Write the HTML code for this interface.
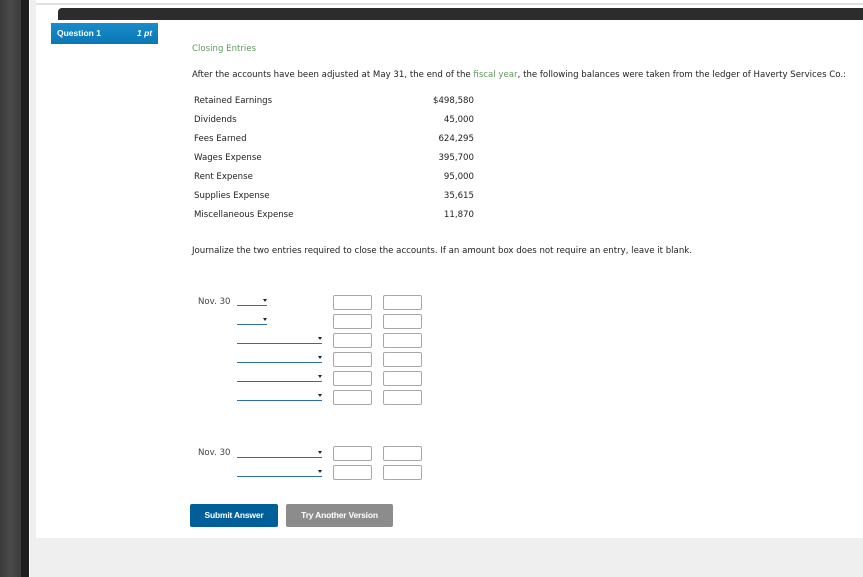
<!DOCTYPE html>
<html><head><style>
*{margin:0;padding:0;box-sizing:border-box}
body{width:863px;height:577px;overflow:hidden;background:#fff;position:relative;font-family:"DejaVu Sans","Liberation Sans",sans-serif;font-size:8.6px;color:#222}
.a{position:absolute;white-space:nowrap}
.box{position:absolute;width:39px;height:15px;border:1px solid #a8a8a8;border-radius:2px;background:#fff}
.sel{position:absolute;height:9px;border-bottom:1.5px solid #2f6ea0}
.sel:after{content:"";position:absolute;right:0;top:2px;border-left:2.5px solid transparent;border-right:2.5px solid transparent;border-top:3px solid #222}
.btn{position:absolute;height:23px;border-radius:2px;color:#fff;font-family:"Liberation Sans",sans-serif;font-weight:bold;font-size:8.5px;text-align:center;line-height:23px;letter-spacing:-0.2px}
.t{top:1px}
</style></head><body>
<div class="a" style="left:0;top:0;width:21px;height:577px;background:linear-gradient(90deg,#3a3a3a,#4a4a4a,#3c3c3c)"></div>
<div class="a" style="left:21px;top:0;width:8px;height:577px;background:#1e1e1e"></div>
<div class="a" style="left:30px;top:0;width:833px;height:577px;background:#efefef"></div>
<div class="a" style="left:36px;top:0;width:827px;height:538px;background:#fff"></div>
<div class="a" style="left:36px;top:3px;width:827px;height:2px;background:#e0e0e0"></div>
<div class="a" style="left:58px;top:8px;width:805px;height:12px;background:#2c2c2c;border-radius:4px 0 0 0"></div>
<div class="a" style="left:51px;top:23px;width:107px;height:21px;background:linear-gradient(#1a8ccb,#0a77b5);color:#fff;font-family:'Liberation Sans',sans-serif;font-weight:bold;font-size:8.5px;line-height:21px;padding-left:6px">Question 1<span style="position:absolute;left:86px;font-style:italic">1 pt</span></div>
<div class="a" style="left:192px;top:44px;color:#5f9a5a">Closing Entries</div>
<div class="a" style="left:192px;top:70px">After the accounts have been adjusted at May 31, the end of the <span style="color:#5f9a5a">fiscal year</span>, the following balances were taken from the ledger of Haverty Services Co.:</div>
<div class="a" style="left:194px;top:96px">Retained Earnings</div><div class="a" style="left:380px;width:94px;text-align:right;top:96px">$498,580</div>
<div class="a" style="left:194px;top:115px">Dividends</div><div class="a" style="left:380px;width:94px;text-align:right;top:115px">45,000</div>
<div class="a" style="left:194px;top:134px">Fees Earned</div><div class="a" style="left:380px;width:94px;text-align:right;top:134px">624,295</div>
<div class="a" style="left:194px;top:153px">Wages Expense</div><div class="a" style="left:380px;width:94px;text-align:right;top:153px">395,700</div>
<div class="a" style="left:194px;top:172px">Rent Expense</div><div class="a" style="left:380px;width:94px;text-align:right;top:172px">95,000</div>
<div class="a" style="left:194px;top:191px">Supplies Expense</div><div class="a" style="left:380px;width:94px;text-align:right;top:191px">35,615</div>
<div class="a" style="left:194px;top:210px">Miscellaneous Expense</div><div class="a" style="left:380px;width:94px;text-align:right;top:210px">11,870</div>
<div class="a" style="left:192px;top:246px">Journalize the two entries required to close the accounts. If an amount box does not require an entry, leave it blank.</div>
<div class="a" style="left:198px;top:297px;color:#444">Nov. 30</div>
<div class="sel" style="left:237px;top:297px;width:30px"></div>
<div class="sel" style="left:237px;top:316px;width:30px"></div>
<div class="sel" style="left:237px;top:335px;width:85px"></div>
<div class="sel" style="left:237px;top:354px;width:85px"></div>
<div class="sel" style="left:237px;top:373px;width:85px"></div>
<div class="sel" style="left:237px;top:392px;width:85px"></div>
<div class="box" style="left:333px;top:295px"></div><div class="box" style="left:383px;top:295px"></div>
<div class="box" style="left:333px;top:314px"></div><div class="box" style="left:383px;top:314px"></div>
<div class="box" style="left:333px;top:333px"></div><div class="box" style="left:383px;top:333px"></div>
<div class="box" style="left:333px;top:352px"></div><div class="box" style="left:383px;top:352px"></div>
<div class="box" style="left:333px;top:371px"></div><div class="box" style="left:383px;top:371px"></div>
<div class="box" style="left:333px;top:390px"></div><div class="box" style="left:383px;top:390px"></div>
<div class="a" style="left:198px;top:448px;color:#444">Nov. 30</div>
<div class="sel" style="left:237px;top:449px;width:85px"></div>
<div class="sel" style="left:237px;top:468px;width:85px"></div>
<div class="box" style="left:333px;top:446px"></div><div class="box" style="left:383px;top:446px"></div>
<div class="box" style="left:333px;top:465px"></div><div class="box" style="left:383px;top:465px"></div>
<div class="btn" style="left:190px;top:504px;width:88px;background:#005f99">Submit Answer</div>
<div class="btn" style="left:286px;top:504px;width:107px;background:#8c8c8c">Try Another Version</div>
</body></html>
